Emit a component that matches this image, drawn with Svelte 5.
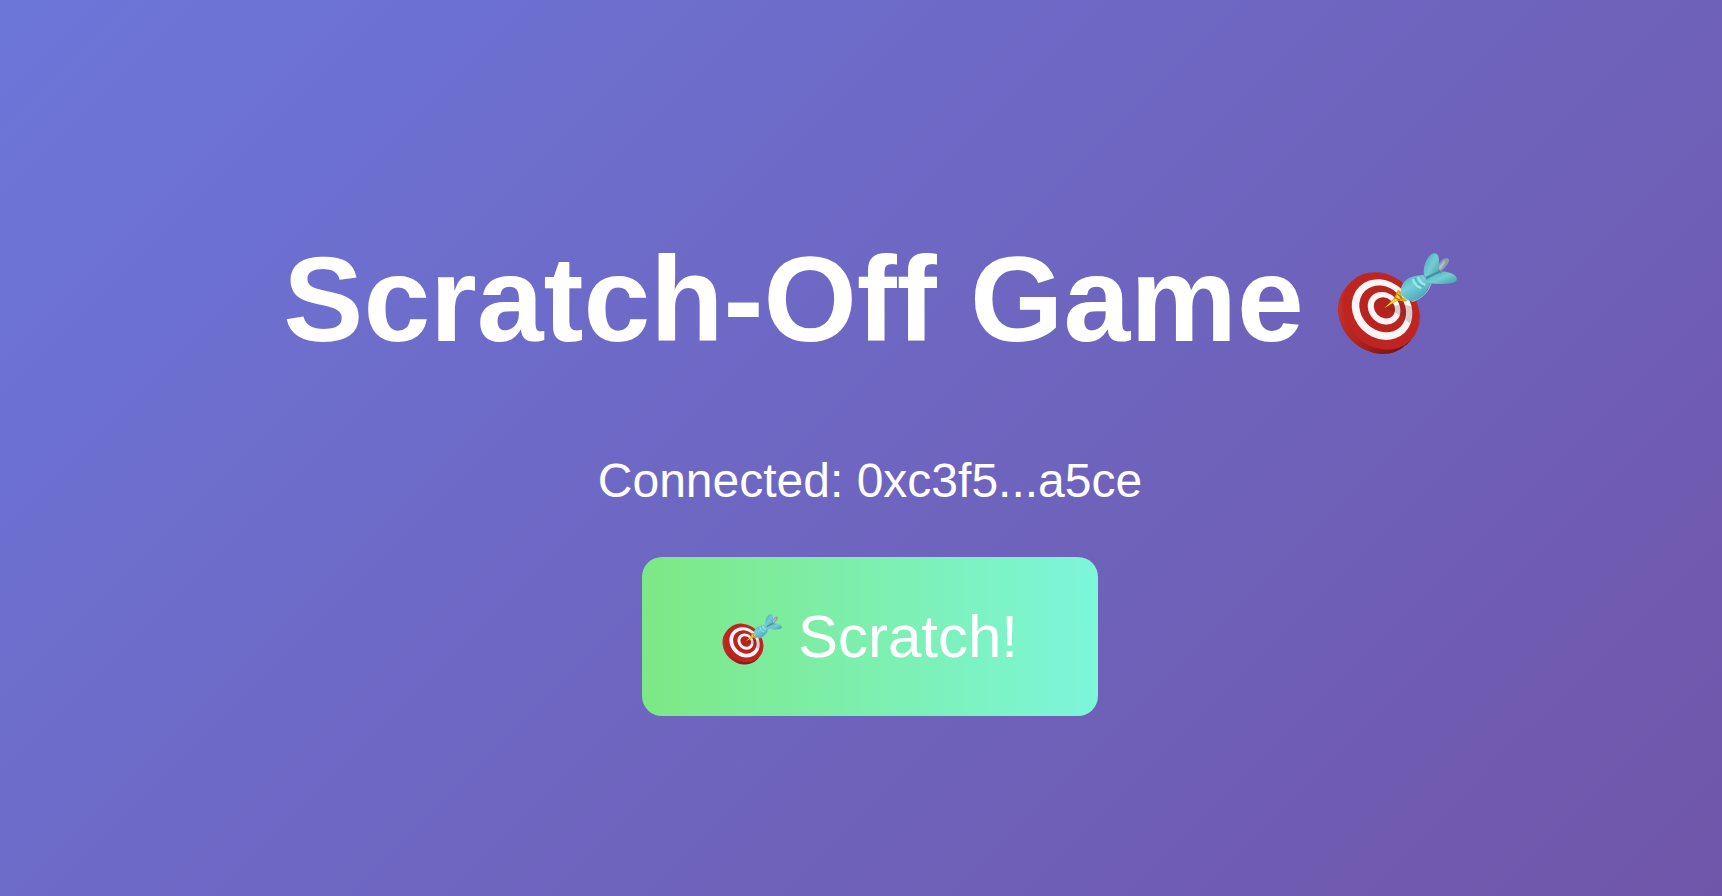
<script>
  let { account = "0xc3f5...a5ce", onscratch } = $props()

  // Rings of the board, outermost first
  const RINGS = [
    { cx: 185, cy: 214, rx: 106, ry: 124, fill: "#be2520" },
    { cx: 188, cy: 210, rx: 84, ry: 96, fill: "#fbf6f5" },
    { cx: 190, cy: 208, rx: 64, ry: 75, fill: "#b9241f" },
    { cx: 194, cy: 206, rx: 45, ry: 52, fill: "#fbf6f5" },
    { cx: 195, cy: 205, rx: 29, ry: 34, fill: "#b3241f" }
  ]
</script>

{#snippet dartboard()}
  <svg class="dartboard" viewBox="54 0 357 357" aria-hidden="true">
    <defs>
      <linearGradient id="rim" gradientUnits="userSpaceOnUse" x1="70" y1="150" x2="220" y2="345">
        <stop offset="0" stop-color="#c6302a" />
        <stop offset="0.5" stop-color="#9c1b19" />
        <stop offset="1" stop-color="#5f0f0f" />
      </linearGradient>
      <linearGradient id="barrel" x1="0" y1="0" x2="0.7" y2="1">
        <stop offset="0" stop-color="#4badb9" />
        <stop offset="0.45" stop-color="#74d0d9" />
        <stop offset="1" stop-color="#46a2b0" />
      </linearGradient>
      <linearGradient id="fin" x1="0" y1="0" x2="1" y2="1">
        <stop offset="0" stop-color="#4ba5b1" />
        <stop offset="0.5" stop-color="#74cdd3" />
        <stop offset="1" stop-color="#419ba7" />
      </linearGradient>
    </defs>

    <!-- thickness of the board, then its face -->
    <ellipse cx="172" cy="227" rx="106" ry="124" transform="rotate(-45 172 227)" fill="url(#rim)" />
    <path d="M97 126L84 139 260 315 273 302z" fill="url(#rim)" />
    {#each RINGS as ring}
      <ellipse
        cx={ring.cx}
        cy={ring.cy}
        rx={ring.rx}
        ry={ring.ry}
        transform="rotate(-45 {ring.cx} {ring.cy})"
        fill={ring.fill}
      />
    {/each}
    <path d="M200 206l44-12 32 6c5 20 2 36-6 52-18-22-42-34-70-46z" fill="#4a2a2a" opacity="0.2" />

    <path d="M195 206l30-32 10-22 8 3 5 18 15 9-3 4-26-2-20 10z" fill="#d9a21c" />
    <path d="M196 205l34-31 6-16 5 7-1 14-14 6z" fill="#ffdc3c" />
    <path d="M226 174l16 9M234 163l14 14" stroke="#996410" stroke-width="3" />

    <path d="M350 84l15-20c7-8 19-9 22-3 2 8-9 22-24 36z" fill="#8d9db0" />
    <path d="M355 84l19-20c6 2-3 17-14 29z" fill="#b2bcc9" />
    <path
      d="M244 157c-1-22 15-40 38-46l28-5 21 24c-6 22-22 42-44 52-9 4-17 3-24-1-11-5-18-13-19-24z"
      fill="url(#barrel)"
    />
    <path d="M276 187c29-8 50-30 58-56" fill="none" stroke="#a5bfe0" stroke-width="3" />
    <path d="M280 119c3 14 12 23 25 27M295 112c3 12 10 20 22 24" fill="none" stroke="#9ce8eb" stroke-width="6" />
    <path d="M287 116c3 13 11 22 24 26" fill="none" stroke="#4baab6" stroke-width="3" />
    <path
      d="M312 106c-2-23 7-50 23-61 9-6 19-2 21 8 4 17-1 32 1 45l-33 23z"
      fill="url(#fin)"
    />
    <path
      d="M320 122c10-14 28-25 46-25 20 0 38 7 44 18 3 8-4 14-14 16-18 4-54 4-70-1z"
      fill="url(#fin)"
    />
    <path d="M319 112l37-17c7-2 10 4 8 8-16 1-31 8-44 19z" fill="#3f929d" />
    <path d="M321 122c20-5 32-11 41-21" fill="none" stroke="#6cc8d0" stroke-width="3" />
  </svg>
{/snippet}

<main>
  <h1>Scratch-Off Game {@render dartboard()}</h1>
  <p>Connected: {account}</p>
  <button type="button" onclick={() => onscratch?.()}>
    {@render dartboard()} Scratch!
  </button>
</main>

<style>
  :global(body) {
    margin: 0;
  }

  main {
    box-sizing: border-box;
    min-height: 100vh;
    padding: 52px 0 0 18px;
    display: flex;
    flex-direction: column;
    align-items: center;
    justify-content: center;
    color: #fff;
    font-family: Arial, "Liberation Sans", sans-serif;
    background: linear-gradient(135deg, #6c76d9 0%, #7056a9 100%);
  }

  h1 {
    display: flex;
    align-items: center;
    gap: 33px;
    margin: 0 0 87px;
    font-size: 120px;
    line-height: 134px;
    font-weight: bold;
  }

  p {
    margin: 0 0 49px;
    font-size: 48px;
    line-height: 55px;
  }

  button {
    display: flex;
    align-items: center;
    gap: 16px;
    padding: 45px 80px;
    border: none;
    border-radius: 20px;
    color: #fff;
    font-family: inherit;
    font-size: 60px;
    line-height: 69px;
    background: linear-gradient(90deg, #7de885, #7df6da);
    cursor: pointer;
  }

  .dartboard {
    flex: none;
    width: 1em;
    height: 1em;
  }
</style>
